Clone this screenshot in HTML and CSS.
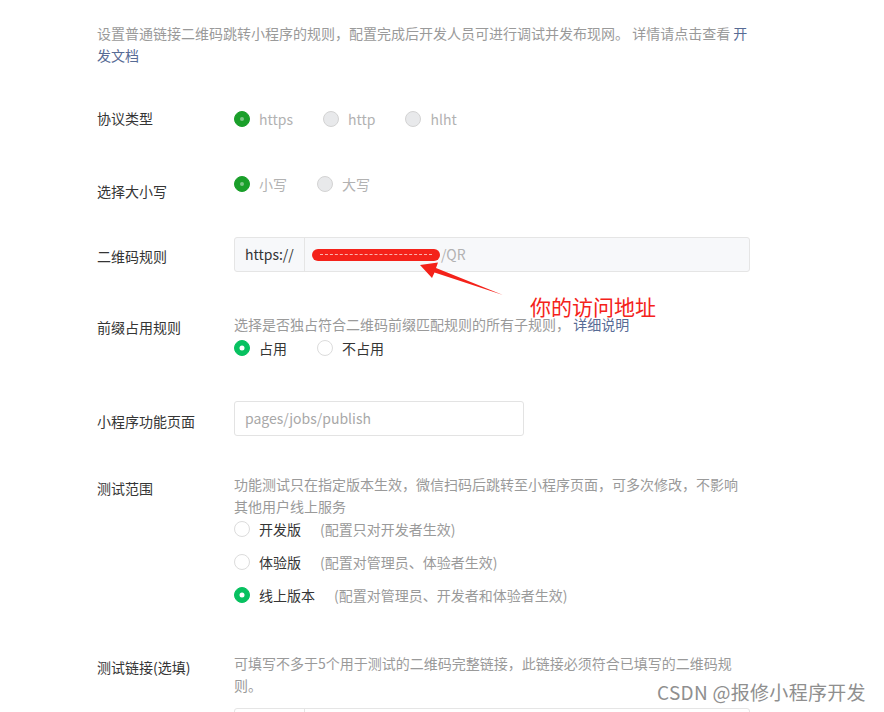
FILE: index.html
```html
<!DOCTYPE html>
<html lang="zh">
<head>
    <meta charset="UTF-8">
    <meta name="viewport" content="width=device-width, initial-scale=1.0">
    <title>扫普通链接二维码打开小程序</title>
    <link rel="stylesheet" href="styles.css">
</head>
<body>
    <div class="page">
        <p class="intro">设置普通链接二维码跳转小程序的规则，配置完成后开发人员可进行调试并发布现网。 详情请点击查看 <a href="#">开</a><br><a href="#">发文档</a></p>

        <div class="form-item item-protocol">
            <div class="form-label">协议类型</div>
            <div class="form-control">
                <div class="radio-row">
                    <label class="radio disabled checked"><span class="radio-icon"></span><span class="radio-text">https</span></label>
                    <label class="radio disabled"><span class="radio-icon"></span><span class="radio-text">http</span></label>
                    <label class="radio disabled"><span class="radio-icon"></span><span class="radio-text">hlht</span></label>
                </div>
            </div>
        </div>

        <div class="form-item item-case">
            <div class="form-label">选择大小写</div>
            <div class="form-control">
                <div class="radio-row">
                    <label class="radio disabled checked"><span class="radio-icon"></span><span class="radio-text">小写</span></label>
                    <label class="radio disabled"><span class="radio-icon"></span><span class="radio-text">大写</span></label>
                </div>
            </div>
        </div>

        <div class="form-item item-rule">
            <div class="form-label">二维码规则</div>
            <div class="form-control">
                <div class="input-group readonly">
                    <span class="input-prefix">https://</span>
                    <span class="input-value">
                        <span class="scribble"><span class="scribble-line"></span></span>
                        <span class="muted">/QR</span>
                    </span>
                </div>
            </div>
        </div>

        <div class="form-item item-prefix">
            <div class="form-label">前缀占用规则</div>
            <div class="form-control">
                <p class="desc">选择是否独占符合二维码前缀匹配规则的所有子规则， <a href="#">详细说明</a></p>
                <div class="radio-row">
                    <label class="radio checked"><span class="radio-icon"></span><span class="radio-text">占用</span></label>
                    <label class="radio"><span class="radio-icon"></span><span class="radio-text">不占用</span></label>
                </div>
            </div>
        </div>

        <div class="form-item item-page">
            <div class="form-label">小程序功能页面</div>
            <div class="form-control">
                <div class="input-box">pages/jobs/publish</div>
            </div>
        </div>

        <div class="form-item item-scope">
            <div class="form-label">测试范围</div>
            <div class="form-control">
                <p class="desc">功能测试只在指定版本生效，微信扫码后跳转至小程序页面，可多次修改，不影响其他用户线上服务</p>
                <div class="radio-list">
                    <label class="radio"><span class="radio-icon"></span><span class="radio-text">开发版</span><span class="radio-tip">(配置只对开发者生效)</span></label>
                    <label class="radio"><span class="radio-icon"></span><span class="radio-text">体验版</span><span class="radio-tip">(配置对管理员、体验者生效)</span></label>
                    <label class="radio checked"><span class="radio-icon"></span><span class="radio-text">线上版本</span><span class="radio-tip">(配置对管理员、开发者和体验者生效)</span></label>
                </div>
            </div>
        </div>

        <div class="form-item item-links">
            <div class="form-label">测试链接(选填)</div>
            <div class="form-control">
                <p class="desc">可填写不多于5个用于测试的二维码完整链接，此链接必须符合已填写的二维码规则。</p>
                <div class="input-group">
                    <span class="input-prefix"></span>
                    <span class="input-value"></span>
                </div>
            </div>
        </div>
    </div>

    <!-- 标注：箭头和说明文字 -->
    <svg class="mark-arrow" width="884" height="712" viewBox="0 0 884 712">
        <polygon fill="#f4221a" points="420,265 438,262.5 436,268 503,295 434.5,272.5 432,278"/>
    </svg>
    <span class="mark-text">你的访问地址</span>

    <span class="watermark">CSDN @报修小程序开发</span>
</body>
</html>
```

FILE: styles.css
```css
html, body {
    height: 712px;
    overflow: hidden;
}
body {
    margin: 0;
    background: #fff;
    font-family: "Noto Sans CJK SC", "Liberation Sans", sans-serif;
    font-size: 14px;
    color: #353535;
}
a {
    color: #576b95;
    text-decoration: none;
}
p {
    margin: 0;
}
.page {
    padding: 22px 0 0 97px;
}
.intro {
    width: 660px;
    line-height: 22px;
    color: #9a9a9a;
}

/* 表单行 */
.form-item {
    display: flex;
    align-items: flex-start;
}
.form-label {
    width: 137px;
    flex-shrink: 0;
    line-height: 22px;
    color: #353535;
}
.form-control {
    width: 516px;
}
.desc {
    width: 508px;
    line-height: 22px;
    color: #9a9a9a;
}

.item-protocol { margin-top: 41px; }
.item-protocol .radio-row { margin-top: 1px; }
.item-case { margin-top: 43px; }
.item-case .form-label { padding-top: 7px; }
.item-rule { margin-top: 35px; }
.item-rule .form-label { padding-top: 8px; }
.item-prefix { margin-top: 41px; }
.item-prefix .form-label { padding-top: 3px; }
.item-prefix .radio-row { margin-top: 2px; }
.item-page { margin-top: 42px; }
.item-page .form-label { padding-top: 9px; }
.item-scope { margin-top: 37px; }
.item-scope .form-label { padding-top: 4px; }
.item-links { margin-top: 46px; }
.item-links .form-label { padding-top: 4px; }
.item-links .input-group { margin-top: 12px; }

/* 单选 */
.radio-row {
    display: flex;
}
.radio {
    display: inline-flex;
    align-items: center;
    line-height: 22px;
    margin-right: 30px;
}
.radio-icon {
    position: relative;
    width: 16px;
    height: 16px;
    box-sizing: border-box;
    border-radius: 50%;
    border: 1px solid #dcdcdc;
    background: #fff;
    margin-right: 9px;
}
.radio.checked .radio-icon {
    background: #07c160;
    border-color: #07c160;
}
.radio.checked .radio-icon::after {
    content: "";
    position: absolute;
    top: 50%;
    left: 50%;
    width: 5px;
    height: 5px;
    border-radius: 50%;
    background: #fff;
    transform: translate(-50%, -50%);
}
.radio.disabled .radio-icon {
    background: #e8e9eb;
    border-color: #d3d3d3;
}
.radio.disabled.checked .radio-icon {
    background: #1a9f2a;
    border-color: #1a9f2a;
}
.radio.disabled.checked .radio-icon::after {
    width: 4px;
    height: 4px;
    background: #7cc687;
}
.radio.disabled .radio-text {
    color: #b2b2b2;
}
.radio-tip {
    margin-left: 19px;
    color: #9a9a9a;
}
.radio-list {
    display: flex;
    flex-direction: column;
    align-items: flex-start;
    padding-top: 1px;
}
.radio-list .radio + .radio {
    margin-top: 11px;
}

/* 输入框 */
.input-group {
    display: flex;
    height: 35px;
    box-sizing: border-box;
    border: 1px solid #e5e5e5;
    border-radius: 3px;
    background: #fff;
}
.input-group.readonly {
    background: #f7f8fa;
}
.input-prefix {
    width: 70px;
    box-sizing: border-box;
    padding-left: 10px;
    line-height: 33px;
    border-right: 1px solid #e5e5e5;
    color: #353535;
}
.input-value {
    flex: 1;
    display: flex;
    align-items: center;
    padding-left: 7px;
    line-height: 33px;
}
.muted {
    color: #b2b2b2;
}
.scribble {
    display: flex;
    align-items: center;
    width: 128px;
    height: 12px;
    box-sizing: border-box;
    padding: 0 8px;
    border-radius: 6px;
    background: #f4221a;
    margin-right: 1px;
}
.scribble-line {
    flex: 1;
    border-top: 1px dashed #f9b3ad;
}
.input-box {
    width: 290px;
    height: 35px;
    box-sizing: border-box;
    padding-left: 10px;
    line-height: 33px;
    border: 1px solid #e3e3e3;
    border-radius: 3px;
    color: #a8a8a8;
}

/* 标注 */
.mark-arrow {
    position: absolute;
    top: 0;
    left: 0;
    pointer-events: none;
}
.mark-text {
    position: absolute;
    left: 530px;
    top: 299px;
    font-size: 21px;
    line-height: 14px;
    color: #f4221a;
}
.watermark {
    position: absolute;
    left: 657px;
    top: 683px;
    font-size: 19px;
    line-height: 18px;
    color: #8f8f8f;
    letter-spacing: 0.3px;
}
```
